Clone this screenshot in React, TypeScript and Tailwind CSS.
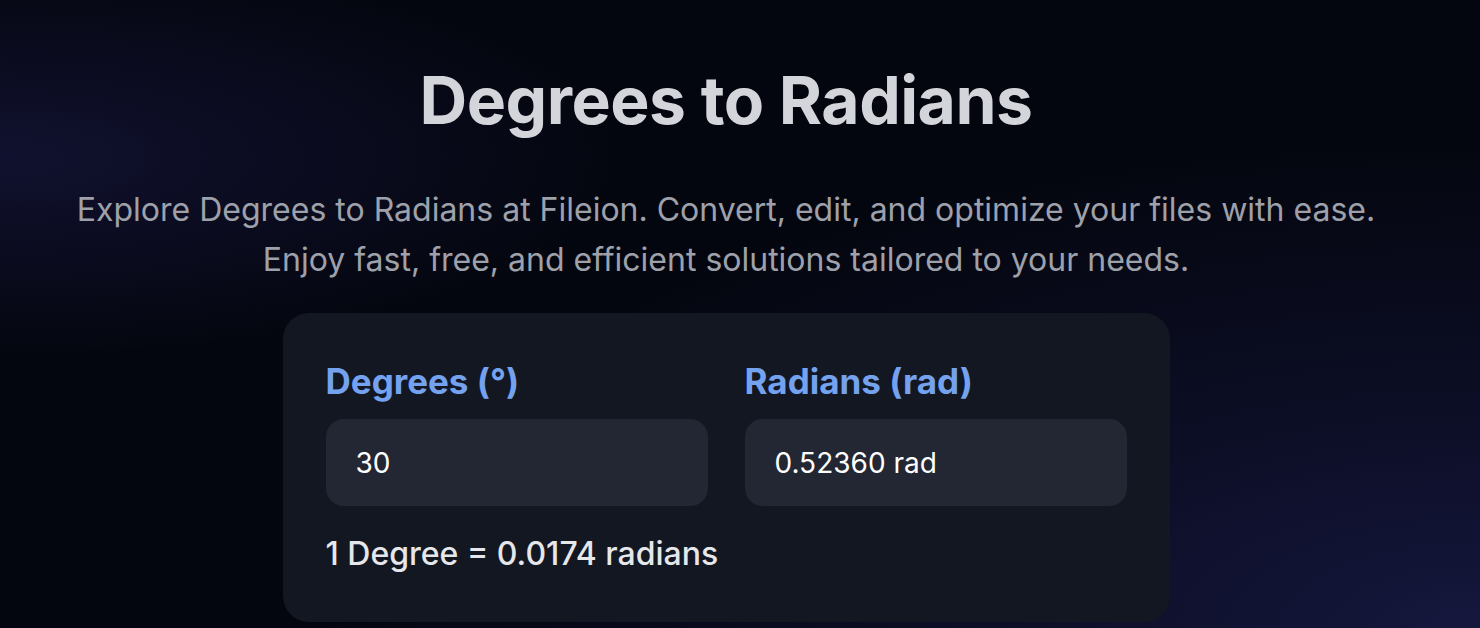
export default function App() {
  return (
    <div className="relative w-full h-[628px] overflow-hidden bg-[#04060f] font-['Inter','Noto_Sans',sans-serif]">
      {/* background glows */}
      <div className="absolute inset-0 bg-[radial-gradient(ellipse_at_100%_100%,#15173d_0%,rgba(20,22,60,0.5)_25%,rgba(4,6,15,0)_55%)]" />
      <div className="absolute inset-0 bg-[radial-gradient(ellipse_at_0%_25%,rgba(22,22,60,0.7)_0%,rgba(4,6,15,0)_30%)]" />

      <div className="relative flex flex-col items-center pr-[28px]">
        <h1 className="mt-[66px] text-[66px] leading-[68px] font-bold tracking-[-0.5px] text-[#d4d5da]">
          Degrees to Radians
        </h1>
        <p className="mt-[51px] text-center text-[32px] leading-[50px] text-[#9ea1aa]">
          Explore Degrees to Radians at Fileion. Convert, edit, and optimize your files with ease.
          <br />
          Enjoy fast, free, and efficient solutions tailored to your needs.
        </p>

        <div className="mt-[28px] w-[887px] rounded-[26px] bg-[#131722] px-[43px] pt-[48px] pb-[48px]">
          <div className="grid grid-cols-2 gap-[37px]">
            <div className="flex flex-col">
              <label className="text-[35px] leading-[40px] font-bold text-[#74a2ee]">Degrees (°)</label>
              <div className="mt-[18px] h-[87px] rounded-[18px] bg-[#232733] px-[30px] flex items-center text-[28px] text-white">
                30
              </div>
            </div>
            <div className="flex flex-col">
              <label className="text-[35px] leading-[40px] font-bold text-[#74a2ee]">Radians (rad)</label>
              <div className="mt-[18px] h-[87px] rounded-[18px] bg-[#232733] px-[30px] flex items-center text-[28px] text-white">
                0.52360 rad
              </div>
            </div>
          </div>
          <div className="mt-[28px] text-[32px] leading-[40px] font-medium text-[#e6e7ea]">
            1 Degree = 0.0174 radians
          </div>
        </div>
      </div>
    </div>
  );
}
